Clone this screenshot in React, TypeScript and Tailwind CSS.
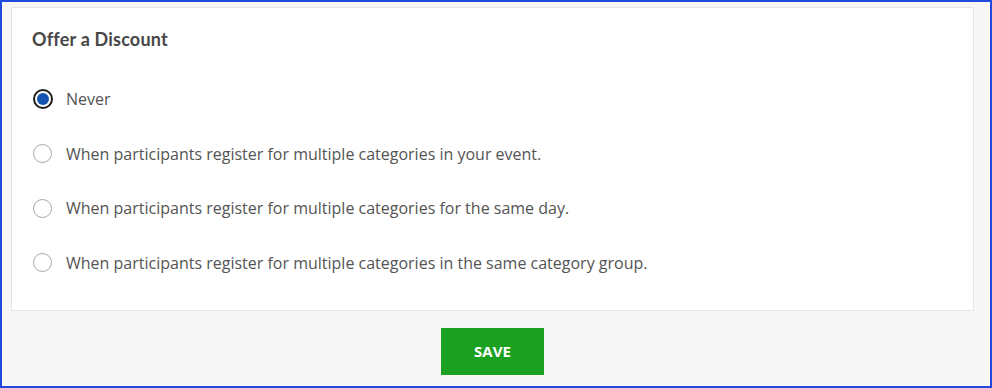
const options = [
  'Never',
  'When participants register for multiple categories in your event.',
  'When participants register for multiple categories for the same day.',
  'When participants register for multiple categories in the same category group.',
]

export default function App() {
  const selected = 0

  return (
    <div className="w-[992px] h-[388px] border-2 border-[#2449e0] bg-[#f7f7f7] pl-[9px] pr-[16px] pt-[5px]">
      {/* Card */}
      <div className="h-[304px] bg-white border border-[#e6e6e6] px-[20px] pt-[19px]">
        <h2 className="text-[18px] tracking-[0.2px] font-bold text-[#474747] font-['Lato','Noto_Sans',sans-serif] leading-[24px]">
          Offer a Discount
        </h2>
        <div className="mt-[38px] flex flex-col gap-[34.5px]">
          {options.map((label, i) => (
            <label key={label} className="flex items-center h-[20px] cursor-pointer">
              <span className="w-[21px] h-[20px] flex items-center justify-center">
                {i === selected ? (
                  <span className="w-[20px] h-[20px] rounded-full border-2 border-[#1c1c1c] flex items-center justify-center bg-white">
                    <span className="w-[12px] h-[12px] rounded-full bg-[#1553b0]" />
                  </span>
                ) : (
                  <span className="w-[19px] h-[19px] rounded-full border-[1.5px] border-[#a8a8a8] bg-white" />
                )}
              </span>
              <span className="ml-[13px] text-[16px] text-[#545454] font-['Open_Sans',sans-serif]">
                {label}
              </span>
            </label>
          ))}
        </div>
      </div>

      {/* Footer */}
      <div className="flex justify-center pt-[17px]">
        <button className="w-[103px] h-[47px] bg-[#1ba11f] text-white text-[15px] font-bold font-['Open_Sans',sans-serif]">
          SAVE
        </button>
      </div>
    </div>
  )
}
